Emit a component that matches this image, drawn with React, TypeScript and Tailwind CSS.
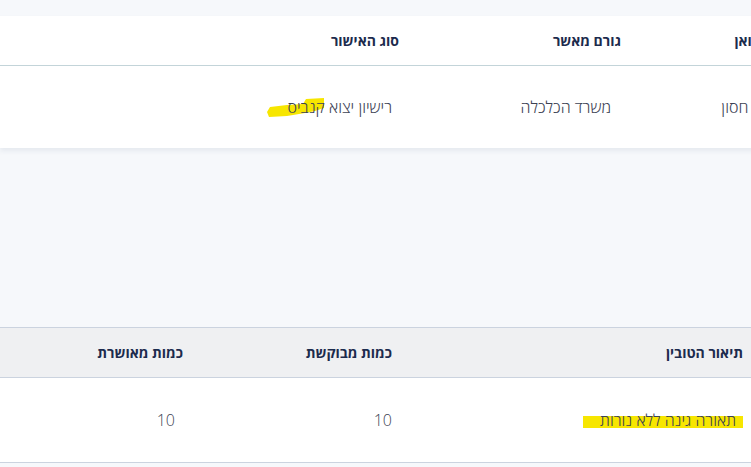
export default function App() {
  const head = "text-[14px] font-bold text-[#1c2b4d]";
  const cell = "text-[16px] font-light text-[#3c4254] leading-6";

  return (
    <div
      className="w-[751px] h-[467px] overflow-hidden bg-[#f6f8fb]"
      style={{ fontFamily: '"Open Sans", "Liberation Sans", "DejaVu Sans", sans-serif' }}
    >
      {/* ─── approval card ─── */}
      <div className="mt-4 w-[880px] bg-white shadow-[0_3px_5px_rgba(40,60,100,0.08)]" dir="rtl">
        <div className="flex h-[50px] items-center border-b border-[#c3d4d9]">
          <div className={`w-[253px] pr-[83px] ${head}`}>שם היבואן</div>
          <div className={`w-[222px] pr-[6px] ${head}`}>גורם מאשר</div>
          <div className={`flex-1 pr-[6px] ${head}`}>סוג האישור</div>
        </div>
        <div className="flex h-[82px] items-center">
          <div className={`w-[253px] pr-[80px] ${cell}`}>אלקטרו חסון</div>
          <div className={`w-[222px] pr-[16px] ${cell}`}>משרד הכלכלה</div>
          <div className={`flex-1 pr-[13px] ${cell}`}>
            <span className="relative inline-block">
              <svg className="absolute top-[3px] left-[-20px] w-[57px] h-[19px]" viewBox="0 0 57 19">
                <path d="M0 14 L3 9 L20 7 L36 6 L39 1 L57 0 L57 10 L48 13 L38 15 L20 18 L2 19 Z" fill="#f7e600" />
              </svg>
              <span className="relative">רישיון יצוא קנביס</span>
            </span>
          </div>
        </div>
      </div>

      {/* ─── goods table ─── */}
      <div className="mt-[179px] w-full border-y border-[#cbd3df] bg-white" dir="rtl">
        <div className="flex h-[50px] items-center border-b border-[#cbd3df] bg-[#eff0f2]">
          <div className={`w-[352px] pr-[8px] ${head}`}>תיאור הטובין</div>
          <div className={`w-[209px] pr-[7px] ${head}`}>כמות מבוקשת</div>
          <div className={`flex-1 pr-[7px] ${head}`}>כמות מאושרת</div>
        </div>
        <div className="flex h-[84px] items-center">
          <div className={`w-[352px] pr-[15px] ${cell}`}>
            <span className="relative inline-block">
              <span className="absolute top-[8px] left-[-17px] right-[-7px] h-[12px] bg-[#f7e600]" />
              <span className="relative">תאורה גינה ללא נורות</span>
            </span>
          </div>
          <div className={`w-[209px] pr-[7px] ${cell}`}>10</div>
          <div className={`flex-1 pr-[15px] ${cell}`}>10</div>
        </div>
      </div>
    </div>
  );
}
